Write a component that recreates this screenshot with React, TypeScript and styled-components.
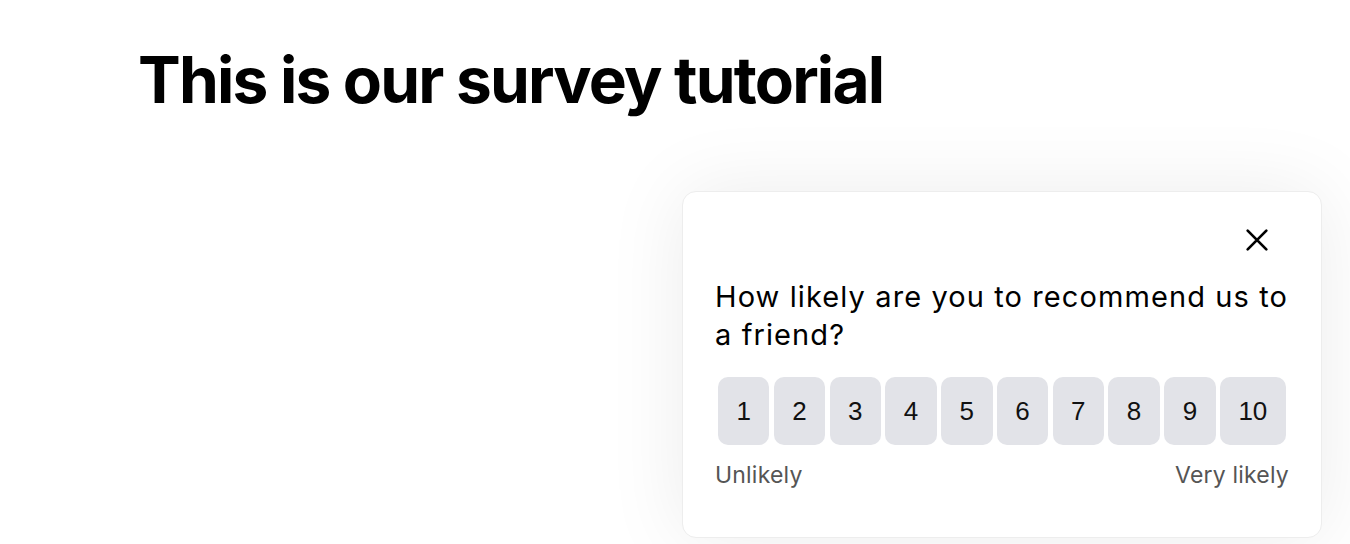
import React from 'react';
import styled, { createGlobalStyle } from 'styled-components';

const GlobalStyle = createGlobalStyle`
  html, body {
    margin: 0;
    padding: 0;
    background: #ffffff;
    font-family: Inter, 'Liberation Sans', sans-serif;
    color: #000;
  }
`;

const Page = styled.div`
  width: 1350px;
  height: 544px;
  overflow: hidden;
  display: flex;
  flex-direction: column;
  box-sizing: border-box;
  padding: 41px 28px 0 138px;
`;

const Title = styled.h1`
  margin: 0;
  font-size: 64px;
  font-weight: 700;
  letter-spacing: -1.8px;
  line-height: 77px;
`;

const Card = styled.div`
  margin-top: 73px;
  margin-left: auto;
  width: 640px;
  box-sizing: border-box;
  padding: 34px 32px 48px 32px;
  background: #fff;
  border: 1px solid #ededed;
  border-radius: 14px;
  box-shadow: 0 0 80px rgba(0, 0, 0, 0.08);
`;

const CloseRow = styled.div`
  display: flex;
  justify-content: flex-end;
  padding-right: 18px;
`;

const CloseButton = styled.button`
  border: none;
  background: none;
  padding: 0;
  width: 28px;
  height: 28px;
  display: flex;
  align-items: center;
  justify-content: center;
  cursor: pointer;
`;

const Question = styled.p`
  margin: 24px 0 0 0;
  font-size: 29px;
  line-height: 38px;
  font-weight: 400;
  letter-spacing: 1.1px;
`;

const Scale = styled.div`
  display: flex;
  gap: 4.3px;
  margin: 23px 0 0 3px;
`;

const ScoreButton = styled.button`
  height: 68px;
  padding: 0 18.5px;
  border: none;
  border-radius: 10px;
  background: #e2e3e8;
  font-family: 'Liberation Sans', Arial, sans-serif;
  font-size: 26px;
  color: #111;
  cursor: pointer;
`;

const Labels = styled.div`
  display: flex;
  justify-content: space-between;
  margin-top: 16px;
  font-size: 23px;
  line-height: 28px;
  letter-spacing: 0.2px;
  color: #555;
`;

const App = () => {
  const scores = Array.from({ length: 10 }, (_, i) => i + 1);
  return (
    <>
      <GlobalStyle />
      <Page>
        <Title>This is our survey tutorial</Title>
        <Card>
          <CloseRow>
            <CloseButton aria-label='Close'>
              <svg width='28' height='28' viewBox='0 0 24 24' fill='none'>
                <path d='M4 4L20 20M20 4L4 20' stroke='#000' strokeWidth='2.3' strokeLinecap='round' />
              </svg>
            </CloseButton>
          </CloseRow>
          <Question>How likely are you to recommend us to a friend?</Question>
          <Scale>
            {scores.map((n) => (
              <ScoreButton key={n}>{n}</ScoreButton>
            ))}
          </Scale>
          <Labels>
            <span>Unlikely</span>
            <span>Very likely</span>
          </Labels>
        </Card>
      </Page>
    </>
  );
};

export default App;
